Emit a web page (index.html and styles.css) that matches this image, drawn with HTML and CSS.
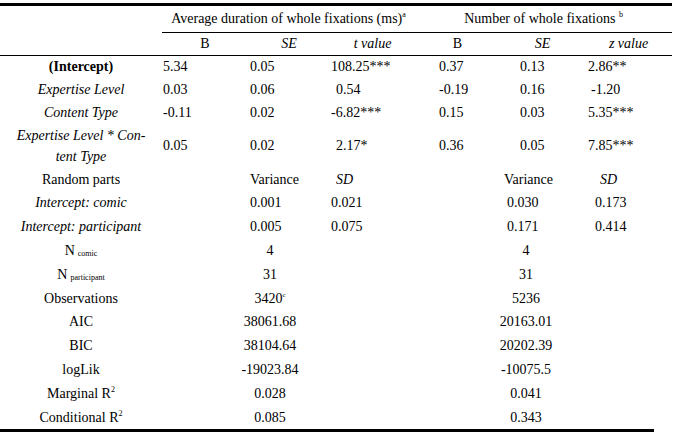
FILE: index.html
```html
<!DOCTYPE html>
<html>
<head>
<meta charset="utf-8">
<link rel="stylesheet" href="styles.css">
</head>
<body>
<div class="wrap">
<table class="tbl">
  <colgroup>
    <col class="w-label"><col class="w-b"><col class="w-se"><col class="w-t"><col class="w-b2"><col class="w-se2"><col class="w-z">
  </colgroup>
  <tr class="h1">
    <td></td>
    <td colspan="3" class="grp g1">Average duration of whole fixations (ms)<sup>a</sup></td>
    <td colspan="3" class="grp g2">Number of whole fixations <sup>b</sup></td>
  </tr>
  <tr class="h2">
    <td></td>
    <td class="c">B</td>
    <td class="c"><i>SE</i></td>
    <td class="c"><i>t value</i></td>
    <td class="c">B</td>
    <td class="c"><i>SE</i></td>
    <td class="c"><i>z value</i></td>
  </tr>
  <tr class="r0">
    <td class="lab"><b>(Intercept)</b></td>
    <td class="vb">5.34</td><td class="vse">0.05</td><td class="vt">108.25***</td>
    <td class="vb2">0.37</td><td class="vse2">0.13</td><td class="vz">2.86**</td>
  </tr>
  <tr class="r0">
    <td class="lab"><i>Expertise Level</i></td>
    <td class="vb">0.03</td><td class="vse">0.06</td><td class="vt ind">0.54</td>
    <td class="vb2">-0.19</td><td class="vse2">0.16</td><td class="vz ind">-1.20</td>
  </tr>
  <tr class="r0">
    <td class="lab"><i>Content Type</i></td>
    <td class="vb">-0.11</td><td class="vse">0.02</td><td class="vt">-6.82***</td>
    <td class="vb2">0.15</td><td class="vse2">0.03</td><td class="vz">5.35***</td>
  </tr>
  <tr class="r2">
    <td class="lab"><i>Expertise Level * Con-<br>tent Type</i></td>
    <td class="vb">0.05</td><td class="vse">0.02</td><td class="vt ind">2.17*</td>
    <td class="vb2">0.36</td><td class="vse2">0.05</td><td class="vz">7.85***</td>
  </tr>
  <tr class="r">
    <td class="lab">Random parts</td>
    <td></td><td class="vse">Variance</td><td class="vt ind"><i>SD</i></td>
    <td></td><td class="vse3">Variance</td><td class="vz sd2"><i>SD</i></td>
  </tr>
  <tr class="r">
    <td class="lab"><i>Intercept: comic</i></td>
    <td></td><td class="vse">0.001</td><td class="vt">0.021</td>
    <td></td><td class="vse3 num3">0.030</td><td class="vz rnd">0.173</td>
  </tr>
  <tr class="r">
    <td class="lab"><i>Intercept: participant</i></td>
    <td></td><td class="vse">0.005</td><td class="vt">0.075</td>
    <td></td><td class="vse3 num3">0.171</td><td class="vz rnd">0.414</td>
  </tr>
  <tr class="r">
    <td class="lab">N<sub>comic</sub></td>
    <td colspan="2" class="s1">4</td><td></td>
    <td colspan="2" class="s2">4</td><td></td>
  </tr>
  <tr class="r">
    <td class="lab">N<sub>participant</sub></td>
    <td colspan="2" class="s1">31</td><td></td>
    <td colspan="2" class="s2">31</td><td></td>
  </tr>
  <tr class="r">
    <td class="lab">Observations</td>
    <td colspan="2" class="s1">3420<sup class="sc">c</sup></td><td></td>
    <td colspan="2" class="s2">5236</td><td></td>
  </tr>
  <tr class="r">
    <td class="lab">AIC</td>
    <td colspan="2" class="s1">38061.68</td><td></td>
    <td colspan="2" class="s2">20163.01</td><td></td>
  </tr>
  <tr class="r">
    <td class="lab">BIC</td>
    <td colspan="2" class="s1">38104.64</td><td></td>
    <td colspan="2" class="s2">20202.39</td><td></td>
  </tr>
  <tr class="r">
    <td class="lab">logLik</td>
    <td colspan="2" class="s1">-19023.84</td><td></td>
    <td colspan="2" class="s2">-10075.5</td><td></td>
  </tr>
  <tr class="r">
    <td class="lab">Marginal R<sup>2</sup></td>
    <td colspan="2" class="s1">0.028</td><td></td>
    <td colspan="2" class="s2">0.041</td><td></td>
  </tr>
  <tr class="r">
    <td class="lab">Conditional R<sup>2</sup></td>
    <td colspan="2" class="s1">0.085</td><td></td>
    <td colspan="2" class="s2">0.343</td><td></td>
  </tr>
</table>
<div class="bottom-rule"></div>
</div>
</body>
</html>
```

FILE: styles.css
```css
html, body {
  margin: 0;
  padding: 0;
  background: #ffffff;
}

body, table, td, b, i, sup, sub {
  font-family: "Liberation Serif", "Times New Roman", "DejaVu Serif", serif;
}

body {
  font-size: 14px;
  color: #000000;
}

.wrap {
  padding-top: 3px;
  width: 676px;
}

.tbl {
  border-collapse: collapse;
  table-layout: fixed;
  width: 672px;
  border-top: 3px solid #000;
  font-size: 14px;
}

.w-label { width: 162px; }
.w-b { width: 86px; }
.w-se { width: 82px; }
.w-t { width: 85px; }
.w-b2 { width: 85px; }
.w-se2 { width: 85px; }
.w-z { width: 87px; }

.tbl td {
  padding: 0;
  vertical-align: middle;
  white-space: nowrap;
  line-height: 21.5px;
}

.tbl sup {
  font-size: 8px;
  vertical-align: 6px;
  line-height: 0;
}

.tbl sub {
  font-size: 8px;
  vertical-align: -1px;
  line-height: 0;
  margin-left: 3px;
}

.h1 td {
  height: 26px;
}

.grp {
  border-bottom: 1px solid #000;
  text-align: center;
}

.g1 { padding-left: 2px; }
.g2 { padding-right: 30px; }

.h2 td {
  height: 21px;
  border-bottom: 1.5px solid #000;
}

.c { text-align: center; }

.r0 td { height: 23px; }
.r td { height: 23.8px; }
.r2 td { height: 43px; }

.lab {
  text-align: center;
  padding-right: 2px;
}

.vb { padding-left: 1px !important; }
.vse { padding-left: 2px !important; }
.vt { padding-left: 1px !important; }
.vb2 { padding-left: 24px !important; }
.vse2 { padding-left: 20px !important; }
.vse3 { padding-left: 4px !important; }
.num3 { padding-left: 7px !important; }
.vz { padding-left: 3px !important; }
.ind { padding-left: 6px !important; }
.rnd { padding-left: 10px !important; }
.sd2 { padding-left: 15px !important; }

.s1 {
  text-align: center;
  padding-left: 48px !important;
}

.s2 {
  text-align: center;
  padding-left: 52px !important;
}

.sc {
  font-size: 7px !important;
}

.bottom-rule {
  width: 654px;
  height: 3px;
  background: #000;
}
```
